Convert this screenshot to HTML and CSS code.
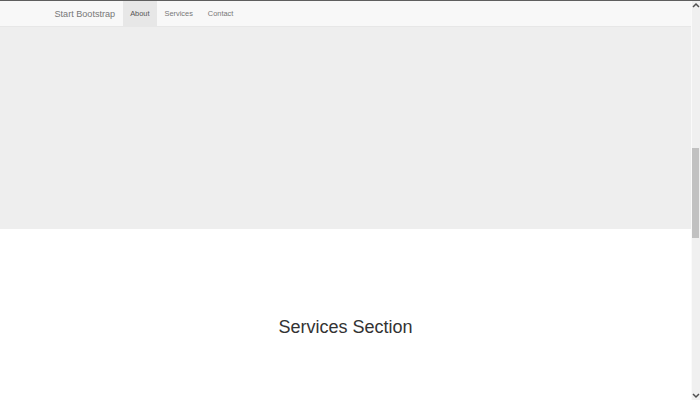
FILE: index.html
```html
<!DOCTYPE html>
<html>
<head>
<meta charset="utf-8">
<link rel="stylesheet" href="styles.css">
</head>
<body>
<div class="window">
  <div class="page">
    <nav class="navbar">
      <div class="nav-inner">
        <a class="brand">Start Bootstrap</a>
        <a class="nav-link active">About</a>
        <a class="nav-link">Services</a>
        <a class="nav-link">Contact</a>
      </div>
    </nav>
    <section class="about"></section>
    <section class="services">
      <h1 class="title">Services Section</h1>
    </section>
  </div>
  <div class="scrollbar">
    <svg class="arrow" width="8" height="8" viewBox="0 0 8 8"><path d="M1 6 L4 3 L7 6" fill="none" stroke="#505050" stroke-width="1.5"/></svg>
    <div class="track"><div class="thumb"></div></div>
    <svg class="arrow" width="8" height="8" viewBox="0 0 8 8"><path d="M1 2 L4 5 L7 2" fill="none" stroke="#505050" stroke-width="1.5"/></svg>
  </div>
</div>
</body>
</html>
```
FILE: styles.css
```css
html, body {
  margin: 0;
  padding: 0;
  height: 100%;
  overflow: hidden;
  background: #fff;
  font-family: "Liberation Sans", Arial, sans-serif;
}
.window {
  display: flex;
  height: 400px;
  border-top: 1px solid #5f5f5f;
  box-sizing: border-box;
}
.page {
  flex: 1;
  min-width: 0;
  display: flex;
  flex-direction: column;
}
.navbar {
  height: 25px;
  background: #f8f8f8;
  border-bottom: 1px solid #e7e7e7;
}
.nav-inner {
  display: flex;
  align-items: stretch;
  height: 100%;
  padding-left: 47px;
}
.brand {
  display: flex;
  align-items: center;
  padding: 0 7.5px;
  font-size: 9.1px;
  color: #777;
}
.nav-link {
  display: flex;
  align-items: center;
  padding: 0 7.5px;
  font-size: 7.4px;
  color: #777;
}
.nav-link.active {
  background: #e7e7e7;
  color: #555;
}
.about {
  height: 202px;
  background: #eeeeee;
}
.services {
  flex: 1;
  padding-top: 88px;
  text-align: center;
}
.title {
  margin: 0;
  font-size: 18px;
  line-height: 20px;
  font-weight: 500;
  color: #333;
}
.scrollbar {
  width: 8px;
  display: flex;
  flex-direction: column;
  background: #f0f0f0;
  border-left: 1px solid #fafafa;
}
.arrow {
  display: block;
  flex: none;
  height: 8px;
  width: 8px;
}
.track {
  flex: 1;
  padding-top: 139px;
}
.thumb {
  width: 7px;
  height: 90px;
  background: #c1c1c1;
}
```
